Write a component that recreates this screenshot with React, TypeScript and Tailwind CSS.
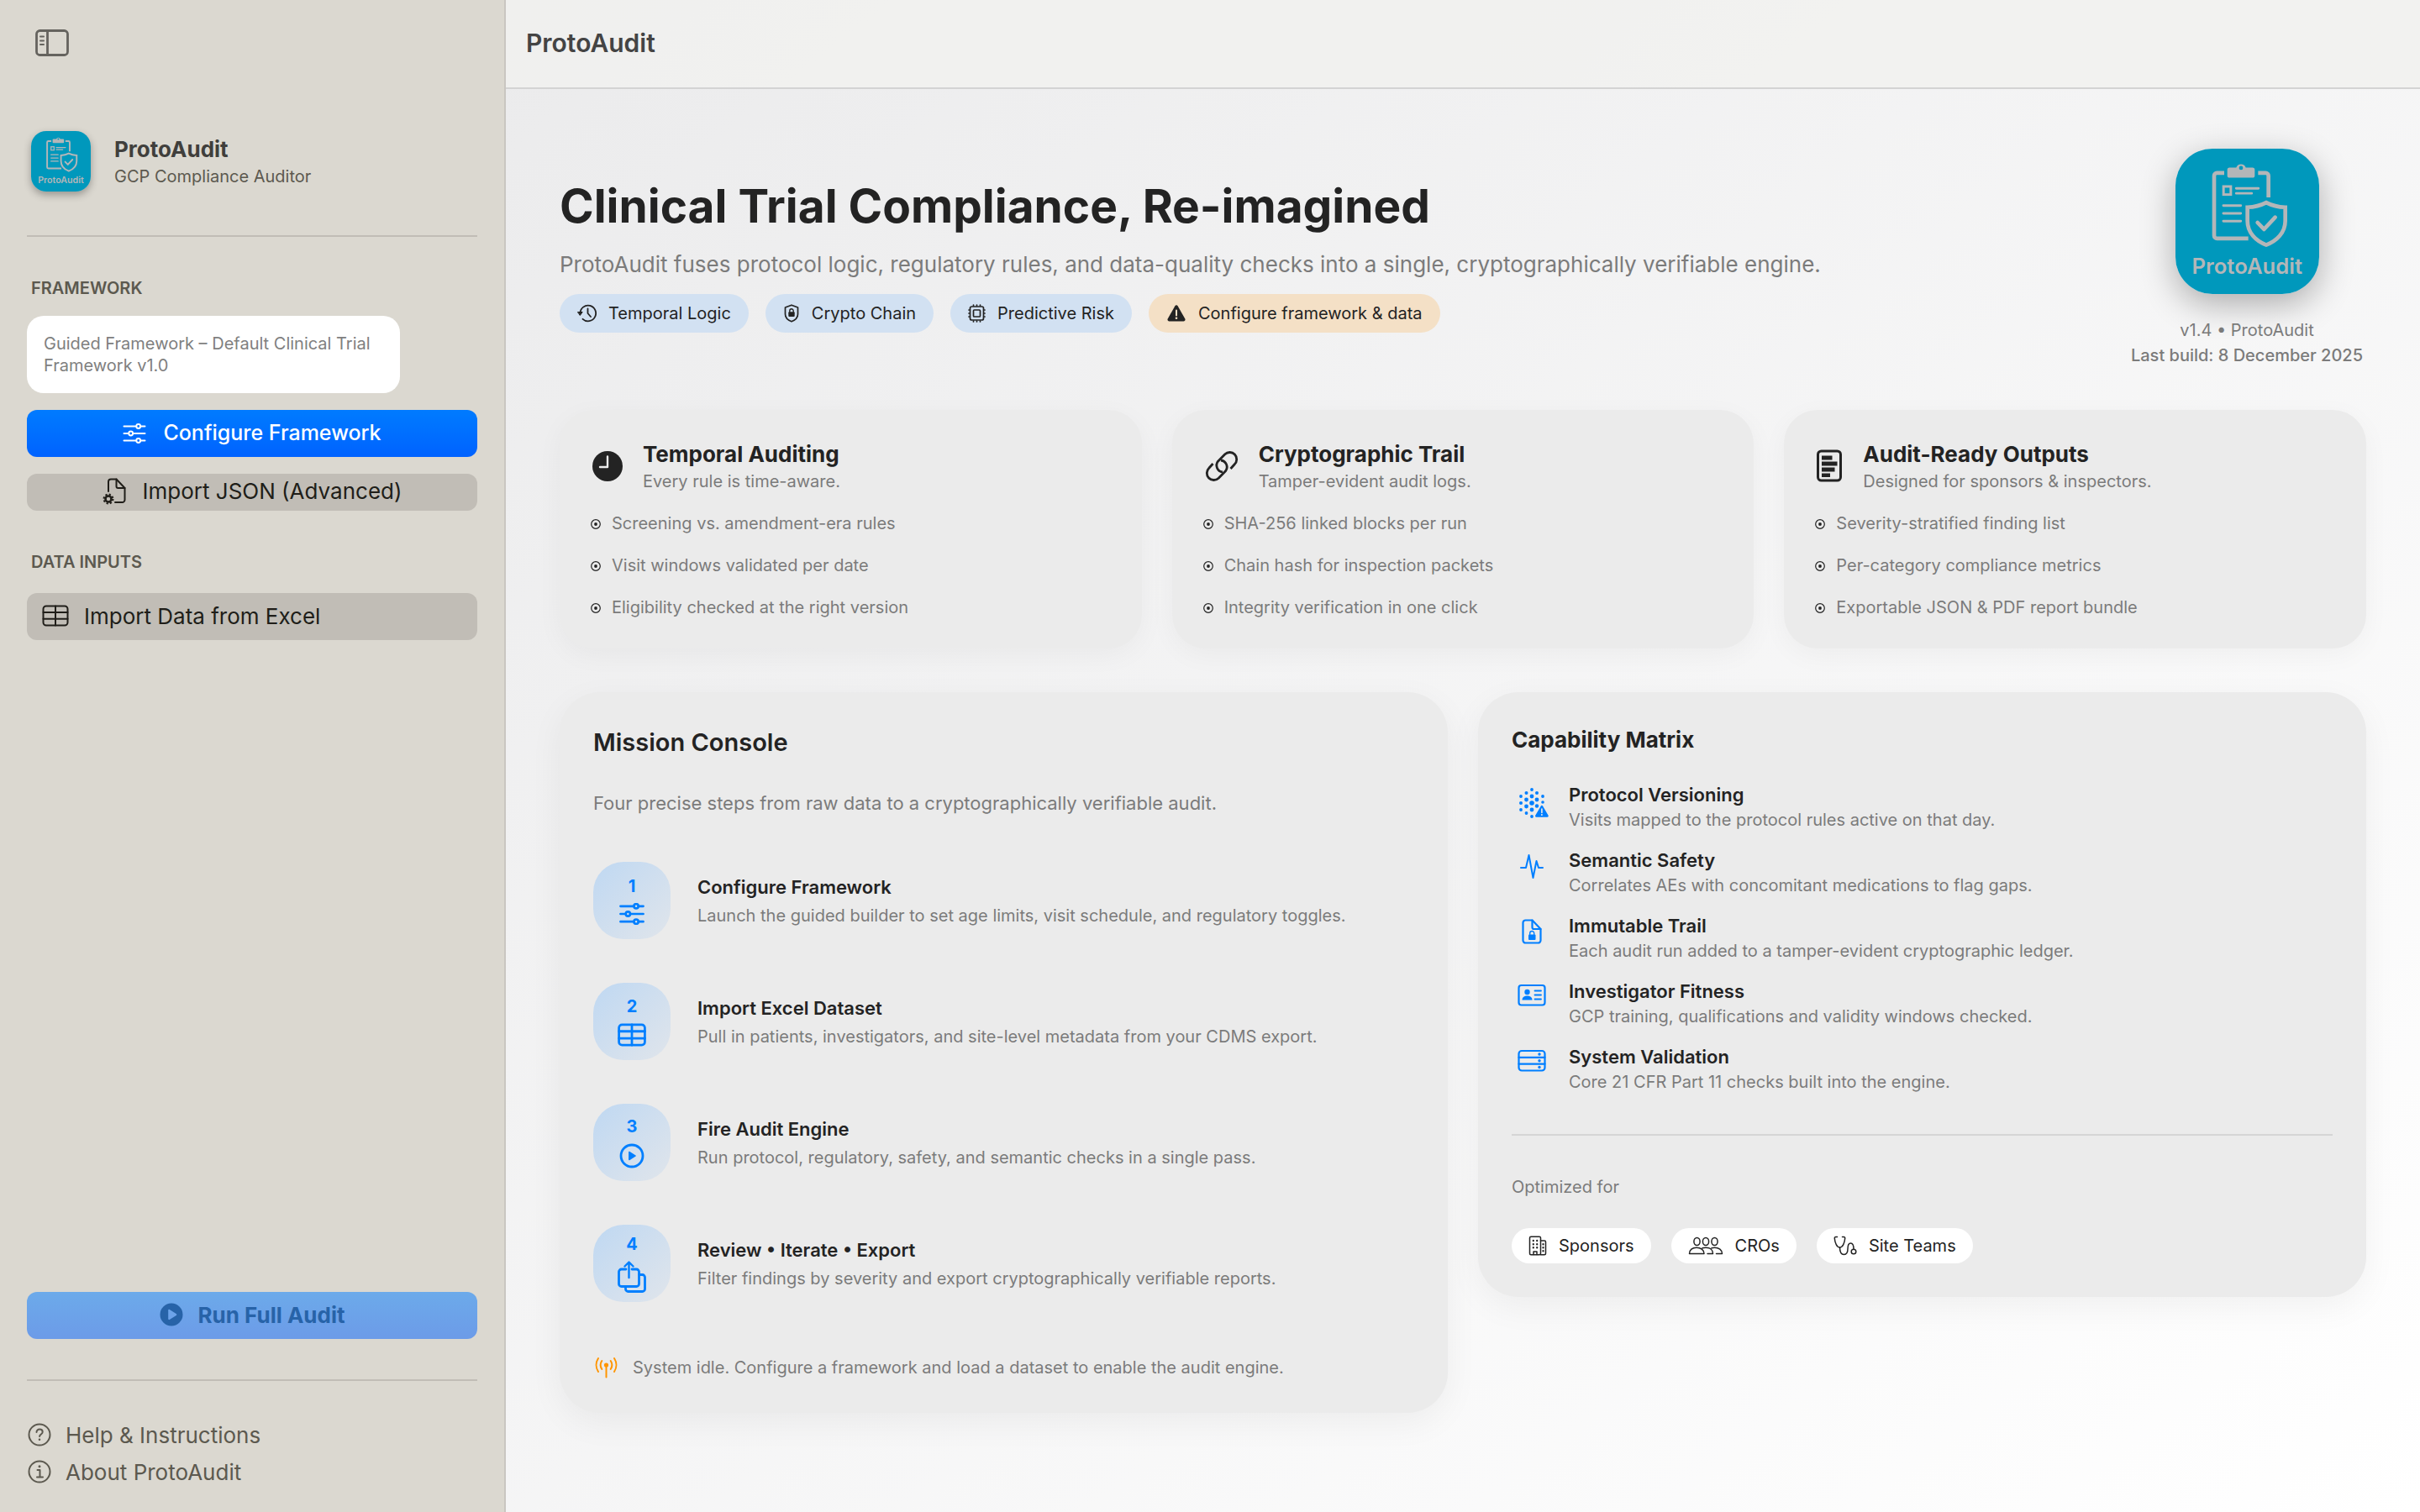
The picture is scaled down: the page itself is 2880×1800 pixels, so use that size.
import React from 'react';

type IconProps = { className?: string };

const stroke = {
  fill: 'none',
  stroke: 'currentColor',
  strokeLinecap: 'round' as const,
  strokeLinejoin: 'round' as const,
};

const SidebarIcon = () => (
  <svg width="40" height="32" viewBox="0 0 40 32" {...stroke} strokeWidth="2.8">
    <rect x="1.5" y="1.5" width="37" height="29" rx="4" />
    <path d="M14.5 1.5v29" />
    <path d="M6 8.5h4M6 13.500h4M6 18h4" strokeWidth="2" />
  </svg>
);

const SlidersIcon = ({ className }: IconProps) => (
  <svg className={className} viewBox="0 0 28 24" {...stroke} strokeWidth="2">
    <path d="M1.5 3.500h14.500M21.500 3.500h5M1.500 12h5.500M12.500 12h14M1.500 20.500h14.500M21.500 20.500h5" />
    <circle cx="18.7" cy="3.5" r="2.4" />
    <circle cx="9.7" cy="12" r="2.4" />
    <circle cx="18.7" cy="20.5" r="2.4" />
  </svg>
);

const FileGearIcon = () => (
  <svg width="28" height="32" viewBox="0 0 28 32" {...stroke} strokeWidth="2">
    <path d="M7 16V4.500a3 3 0 0 1 3-3h6.500L26.500 12v14a3 3 0 0 1-3 3H15" />
    <path d="M16.500 1.500V10a2 2 0 0 0 2 2h8" />
    <circle cx="7" cy="25" r="3.5" strokeWidth="2.6" />
    <circle cx="7" cy="25" r="5.4" strokeWidth="2.2" strokeDasharray="2.2 2.04" strokeLinecap="butt" />
  </svg>
);

const TableIcon = ({ className, weight = 2 }: IconProps & { weight?: number }) => (
  <svg className={className} viewBox="0 0 32 26" {...stroke} strokeWidth={weight}>
    <rect x="1.5" y="1.5" width="29" height="23" rx="3.5" />
    <path d="M16 1.500v23M1.500 9h29M1.500 16.800h29" />
  </svg>
);

const PlayFilledIcon = () => (
  <svg width="28" height="28" viewBox="0 0 28 28">
    <path
      fill="currentColor"
      fillRule="evenodd"
      d="M14 .5a13.500 13.500 0 1 0 0 27 13.500 13.500 0 0 0 0-27Zm-3.800 8.400v10.200c0 .9.900 1.300 1.600.9l7.900-4.900c.8-.5.8-1.700 0-2.200L11.800 8c-.7-.4-1.600 0-1.600.9Z"
    />
  </svg>
);

const PlayIcon = () => (
  <svg width="30" height="30" viewBox="0 0 30 30" {...stroke} strokeWidth="2.8">
    <circle cx="15" cy="15" r="13" />
    <path d="M11.800 10.400v9.200l7.400-4.600Z" fill="currentColor" strokeWidth="1.4" />
  </svg>
);

const ShareIcon = () => (
  <svg width="34" height="38" viewBox="0 0 34 38" {...stroke} strokeWidth="2.8">
    <path d="M10 10H4.500a3 3 0 0 0-3 3v14.500a3 3 0 0 0 3 3h18a3 3 0 0 0 3-3V13a3 3 0 0 0-3-3H17" />
    <path d="M26 16.500h3.500a3 3 0 0 1 3 3v14a3 3 0 0 1-3 3h-17a3 3 0 0 1-3-3v-2.500" />
    <path d="M13.500 20V2M8.500 6.500l5-5 5 5" strokeWidth="2.4" />
  </svg>
);

const HelpIcon = () => (
  <svg width="28" height="28" viewBox="0 0 28 28" {...stroke} strokeWidth="2">
    <circle cx="14" cy="14" r="12.5" />
    <path d="M10.500 11c0-2 1.600-3.400 3.600-3.400s3.600 1.300 3.600 3.200c0 2.700-3.600 2.700-3.600 5.200" />
    <circle cx="14" cy="19.8" r=".6" fill="currentColor" strokeWidth="1.4" />
  </svg>
);

const InfoIcon = () => (
  <svg width="28" height="28" viewBox="0 0 28 28" {...stroke} strokeWidth="2">
    <circle cx="14" cy="14" r="12.5" />
    <path d="M11.500 12h3v8.500M11 20.500h7" />
    <circle cx="14" cy="7.8" r=".8" fill="currentColor" strokeWidth="1.4" />
  </svg>
);

const HistoryIcon = () => (
  <svg width="23" height="22" viewBox="0 0 23 22" {...stroke} strokeWidth="1.8">
    <path d="M3.500 11a9.300 9.300 0 1 1 3 6.800" />
    <path d="M.8 9.500h5.400L3.500 13.200Z" fill="currentColor" strokeWidth="1" />
    <path d="M12.500 5.500V11l3.500 4" />
  </svg>
);

const ShieldLockIcon = () => (
  <svg width="20" height="22" viewBox="0 0 20 22" {...stroke} strokeWidth="1.7">
    <path d="M10 1.200 17.500 4v8c0 4.500-3 7-7.500 8.800C5.500 19 2.500 16.500 2.500 12V4Z" />
    <rect x="6.3" y="9.3" width="7.4" height="5.6" rx="1" fill="currentColor" stroke="none" />
    <path d="M7.800 9.500V8a2.200 2.200 0 0 1 4.400 0v1.500" strokeWidth="1.4" />
  </svg>
);

const CpuIcon = () => (
  <svg width="21" height="22" viewBox="0 0 21 22" {...stroke} strokeWidth="1.7">
    <rect x="2.5" y="3" width="16" height="16" rx="2" />
    <rect x="6.5" y="7" width="8" height="8" rx="1" />
    <path d="M6.500 1v1M10.500 1v1M14.500 1v1M6.500 20v1M10.500 20v1M14.500 20v1M1 7h.5M1 11h.5M1 15h.5M19.500 7h.5M19.500 11h.5M19.500 15h.5" />
  </svg>
);

const WarningIcon = () => (
  <svg width="24" height="20" viewBox="-1 0 24 20">
    <path fill="currentColor" d="M9.400 1.200a1.900 1.900 0 0 1 3.200 0l8.700 15.400c.7 1.300-.2 2.900-1.700 2.900H2.400c-1.500 0-2.400-1.600-1.700-2.900Z" />
    <path d="M11 6.500v6" stroke="#f4e0c6" strokeWidth="2" strokeLinecap="round" />
    <circle cx="11" cy="15.8" r="1.3" fill="#f4e0c6" />
  </svg>
);

const ClockIcon = () => (
  <svg width="39" height="38" viewBox="0 0 39 38">
    <circle cx="21" cy="19" r="18" fill="currentColor" />
    <path d="M21 7.500V20h-9" fill="none" stroke="#ebebeb" strokeWidth="2.4" strokeLinecap="round" strokeLinejoin="round" />
  </svg>
);

const LinkIcon = () => (
  <svg width="43" height="38" viewBox="-4 0 43 38" {...stroke} strokeWidth="2.8" strokeLinecap="butt">
    <path d="M29.500 22L34.200 16.700A8 8 0 0 0 22.800 4.800L14.500 13.200A8 8 0 0 0 20 26" />
    <path d="M8.500 16L3.800 21.300A8 8 0 0 0 15.200 33.200L23.500 24.800A8 8 0 0 0 18 12" />
  </svg>
);

const ReportIcon = () => (
  <svg width="34" height="40" viewBox="0 0 34 40">
    <rect x="4.5" y="2" width="27" height="35" rx="4" fill="none" stroke="currentColor" strokeWidth="3" />
    <path fill="currentColor" d="M9 7.500H21.500v5H9ZM9 14.500H27.500v5H9ZM9 21.500H24.500v5H9ZM9 28.500H19v4.500H9Z" />
  </svg>
);

const BulletIcon = () => (
  <svg width="14" height="12" viewBox="0 0 14 12">
    <circle cx="7" cy="6" r="5.3" fill="none" stroke="currentColor" strokeWidth="1.2" />
    <circle cx="7" cy="6" r="1.9" fill="currentColor" />
  </svg>
);

const AntennaIcon = () => (
  <svg width="31" height="26" viewBox="0 0 31 26" {...stroke} strokeWidth="2">
    <path d="M6 2a14.500 14.500 0 0 0 0 16M25 2a14.500 14.500 0 0 1 0 16M10.300 5a9 9 0 0 0 0 10M20.700 5a9 9 0 0 1 0 10M15.500 11v13.500" />
    <circle cx="15.5" cy="10" r="1.6" fill="currentColor" />
  </svg>
);

const dots = [
  [17, 3, 1.9], [10.5, 7, 2], [23, 7, 2], [4, 11, 1.9], [17, 11, 2.4], [30, 11, 1.9],
  [10.5, 15, 2.4], [23, 15, 2.4], [4, 19, 2], [17, 19, 2.8], [30, 18, 1.8],
  [10.5, 23, 2.4], [23, 22.5, 2.2], [4, 27, 1.9], [17, 27, 2.4], [10.5, 31, 1.9], [17, 35, 1.9],
];

const DotsIcon = () => (
  <svg width="38" height="38" viewBox="-2 0 38 38" className="overflow-visible" fill="currentColor">
    {dots.map(([x, y, r]) => (
      <circle key={`${x}-${y}`} cx={x} cy={y} r={r} />
    ))}
    <path d="M27.800 22.500c.5-.9 1.700-.9 2.200 0l6.600 11.300c.5.9-.1 1.900-1.100 1.900H22.300c-1 0-1.600-1-1.100-1.900Z" />
    <path d="M28.900 26v4.500" stroke="#ebebeb" strokeWidth="1.6" strokeLinecap="round" />
    <circle cx="28.9" cy="33" r="1" fill="#ebebeb" />
  </svg>
);

const PulseIcon = () => (
  <svg width="30" height="32" viewBox="0 0 30 32" {...stroke} strokeWidth="2">
    <path d="M2 18h6L11.500 3l5 27 4-20 2.500 8h5" />
  </svg>
);

const FileLockIcon = () => (
  <svg width="24" height="32" viewBox="0 0 24 32" {...stroke} strokeWidth="2.2">
    <path d="M4.500 2.500h8L22.500 13v13.500a3 3 0 0 1-3 3h-15a3 3 0 0 1-3-3v-21a3 3 0 0 1 3-3Z" />
    <path d="M12.500 2.500V11a2 2 0 0 0 2 2h8" />
    <rect x="8" y="19.5" width="8.5" height="6.5" rx="1" fill="currentColor" stroke="none" />
    <path d="M9.700 19.500V18a2.500 2.500 0 0 1 5 0v1.500" strokeWidth="1.4" />
  </svg>
);

const IdCardIcon = () => (
  <svg width="34" height="28" viewBox="0 0 34 28" {...stroke} strokeWidth="2.2">
    <rect x="1.5" y="2" width="31" height="23.5" rx="3" />
    <circle cx="11.5" cy="10" r="3.2" fill="currentColor" stroke="none" />
    <path d="M5.500 19.500c0-3.500 2.700-5 6-5s6 1.500 6 5Z" fill="currentColor" stroke="none" />
    <path d="M20.500 8.500h7.500M20.500 13.500h7.500M20.500 18.500h7.500" strokeWidth="1.8" />
  </svg>
);

const ServerIcon = () => (
  <svg width="34" height="28" viewBox="0 0 34 28" {...stroke} strokeWidth="2.2">
    <rect x="1.5" y="2" width="31" height="23.5" rx="3.5" />
    <path d="M1.500 9.800h31M1.500 17.600h31" />
    <g fill="currentColor" stroke="none">
      <circle cx="26" cy="6" r="1.7" />
      <circle cx="26" cy="13.7" r="1.7" />
      <circle cx="26" cy="21.5" r="1.7" />
    </g>
  </svg>
);

const BuildingIcon = () => (
  <svg width="22" height="24" viewBox="0 0 22 24" {...stroke} strokeWidth="1.5">
    <rect x="1.5" y="1.2" width="13" height="21.6" rx="1.5" />
    <path d="M14.500 6h4.500a1.500 1.500 0 0 1 1.500 1.500v13.800a1.500 1.500 0 0 1-1.500 1.500h-4.500M6 22.500V19h4v3.500" />
    <path d="M5.800 5.800v.4M10.200 5.800v.4M5.800 10v.4M10.200 10v.4M5.800 14v.4M10.200 14v.4M17.500 10v.4M17.500 14v.4M17.500 18v.4" strokeWidth="2.2" />
  </svg>
);

const PeopleIcon = () => (
  <svg width="42" height="22" viewBox="0 0 42 22" {...stroke} strokeWidth="1.5">
    <ellipse cx="10.5" cy="6" rx="3.6" ry="4.5" />
    <ellipse cx="21" cy="6" rx="3.6" ry="4.5" />
    <ellipse cx="31.5" cy="6" rx="3.6" ry="4.5" />
    <path d="M1.500 20.500c0-4.500 3.500-7.300 8.500-7.300s9 2.800 9 7.300ZM17 13.800c1.200-.4 2.500-.6 4-.6 5 0 8.500 2.800 8.500 7.300h-6.500M28 13.800c1.200-.4 2.200-.6 3.500-.6 5 0 9 2.800 9 7.300h-7" />
  </svg>
);

const StethoscopeIcon = () => (
  <svg width="28" height="24" viewBox="0 0 28 24" {...stroke} strokeWidth="1.5">
    <path d="M4.500 1.500H2.800a1.500 1.500 0 0 0-1.500 1.700C1.700 8.500 4 14 7.500 14s5.800-5.500 6.200-10.800a1.500 1.500 0 0 0-1.500-1.700h-1.700" />
    <path d="M7.500 14c0 5 1.500 8.500 5 8.500 4 0 4.500-3 4.500-7s1-6.500 3.500-6.500c2.200 0 3.500 2.500 3.500 7" />
    <circle cx="24" cy="19" r="2.8" />
  </svg>
);

const AppLogo = ({ className }: IconProps) => (
  <svg className={className} viewBox="0 0 513 521" preserveAspectRatio="none" role="img" aria-label="ProtoAudit logo">
    <rect width="513" height="521" fill="#0098bc" />
    <g fill="none" stroke="#b4b6b8" strokeWidth="14">
      <path d="M174 87h-26a10 10 0 0 0-10 10v215a10 10 0 0 0 10 10h112M295 87h27a10 10 0 0 1 10 10v78" />
      <path d="M324 193q-30 16-67 17v49c0 42 30 72 67 86 37-14 68-44 68-86v-49q-38-1-68-17Z" />
      <path d="M293 265l23 24 40-43" strokeLinecap="round" strokeLinejoin="round" />
    </g>
    <g fill="none" stroke="#b4b6b8" strokeWidth="9" strokeLinecap="round">
      <rect x="171.5" y="135.5" width="26" height="29" />
      <path d="M217 142h79M217 160h55M171 204h62M171 232h62M171 260h62" />
    </g>
    <path
      fill="#b4b6b8"
      fillRule="evenodd"
      d="M193 68h24a18 18 0 0 1 34 0h24a8 8 0 0 1 8 8v20a8 8 0 0 1-8 8h-82a8 8 0 0 1-8-8V76a8 8 0 0 1 8-8Zm41-6a7 7 0 1 0 0 14 7 7 0 0 0 0-14Z"
    />
    <text x="256" y="448" textAnchor="middle" fontSize="77" fontWeight="600" fill="#b4b6b8">
      ProtoAudit
    </text>
  </svg>
);

const chips = [
  { label: 'Temporal Logic', icon: <HistoryIcon />, tone: 'bg-[#d2e1f2]' },
  { label: 'Crypto Chain', icon: <ShieldLockIcon />, tone: 'bg-[#d2e1f2]' },
  { label: 'Predictive Risk', icon: <CpuIcon />, tone: 'bg-[#d2e1f2]' },
  { label: 'Configure framework & data', icon: <WarningIcon />, tone: 'bg-[#f4e0c6]' },
];

const features = [
  {
    title: 'Temporal Auditing',
    subtitle: 'Every rule is time-aware.',
    icon: <ClockIcon />,
    points: ['Screening vs. amendment-era rules', 'Visit windows validated per date', 'Eligibility checked at the right version'],
  },
  {
    title: 'Cryptographic Trail',
    subtitle: 'Tamper-evident audit logs.',
    icon: <LinkIcon />,
    points: ['SHA-256 linked blocks per run', 'Chain hash for inspection packets', 'Integrity verification in one click'],
  },
  {
    title: 'Audit-Ready Outputs',
    subtitle: 'Designed for sponsors & inspectors.',
    icon: <ReportIcon />,
    points: ['Severity-stratified finding list', 'Per-category compliance metrics', 'Exportable JSON & PDF report bundle'],
  },
];

const steps = [
  {
    title: 'Configure Framework',
    text: 'Launch the guided builder to set age limits, visit schedule, and regulatory toggles.',
    icon: <SlidersIcon className="h-[26px] w-[32px] stroke-[2.5]" />,
  },
  {
    title: 'Import Excel Dataset',
    text: 'Pull in patients, investigators, and site-level metadata from your CDMS export.',
    icon: <TableIcon className="h-[28px] w-[34px]" weight={2.6} />,
  },
  {
    title: 'Fire Audit Engine',
    text: 'Run protocol, regulatory, safety, and semantic checks in a single pass.',
    icon: <PlayIcon />,
  },
  {
    title: 'Review • Iterate • Export',
    text: 'Filter findings by severity and export cryptographically verifiable reports.',
    icon: <ShareIcon />,
  },
];

const capabilities = [
  { title: 'Protocol Versioning', text: 'Visits mapped to the protocol rules active on that day.', icon: <DotsIcon /> },
  { title: 'Semantic Safety', text: 'Correlates AEs with concomitant medications to flag gaps.', icon: <PulseIcon /> },
  { title: 'Immutable Trail', text: 'Each audit run added to a tamper-evident cryptographic ledger.', icon: <FileLockIcon /> },
  { title: 'Investigator Fitness', text: 'GCP training, qualifications and validity windows checked.', icon: <IdCardIcon /> },
  { title: 'System Validation', text: 'Core 21 CFR Part 11 checks built into the engine.', icon: <ServerIcon /> },
];

const audiences = [
  { label: 'Sponsors', icon: <BuildingIcon /> },
  { label: 'CROs', icon: <PeopleIcon /> },
  { label: 'Site Teams', icon: <StethoscopeIcon /> },
];

const Sidebar = () => (
  <aside className="flex w-[602px] shrink-0 flex-col border-r-2 border-[#c9c6c1] bg-[#dbd8d0] px-8 pb-[26px] pt-[35px] text-[#5c594f]">
    <button className="ml-[10px] self-start text-[#65635e]" aria-label="Toggle sidebar">
      <SidebarIcon />
    </button>

    <div className="mt-[89px] flex items-center gap-7 pl-[5px]">
      <AppLogo className="h-[72px] w-[71px] rounded-[18px] shadow-[0_4px_10px_rgba(0,0,0,0.3)]" />
      <div className="pt-[3px]">
        <h2 className="text-[26px] font-bold leading-8 text-[#403f3c]">ProtoAudit</h2>
        <p className="text-xl leading-8">GCP Compliance Auditor</p>
      </div>
    </div>

    <hr className="mt-[52px] border-t-2 border-[#c1bdb6]" />

    <h3 className="mt-[49px] pl-[5px] text-xl font-semibold leading-6">FRAMEWORK</h3>
    <div className="mt-[21px] max-w-[444px] rounded-[20px] bg-white px-5 py-5 text-xl leading-[26px] text-[#808080]">
      Guided Framework – Default Clinical Trial Framework v1.0
    </div>
    <button className="mt-5 flex h-14 items-center justify-center gap-5 rounded-xl bg-linear-to-b from-[#007bff] to-[#0062ff] text-[25px] font-medium text-white">
      <SlidersIcon className="h-[24px] w-[28px]" />
      Configure Framework
    </button>
    <button className="mt-5 flex h-11 items-center justify-center gap-5 rounded-xl bg-[#c1bdb6] pb-[3px] text-[26px] text-[#201e19]">
      <FileGearIcon />
      Import JSON (Advanced)
    </button>

    <h3 className="mt-[49px] pl-[5px] text-xl font-semibold leading-6">DATA INPUTS</h3>
    <button className="mt-[25px] flex h-14 items-center gap-[18px] rounded-xl bg-[#c1bdb6] px-[18px] pb-0.5 text-[26px] text-[#201e19]">
      <TableIcon className="h-[26px] w-[32px]" />
      Import Data from Excel
    </button>

    <button
      disabled
      className="mt-auto flex h-14 items-center justify-center gap-[18px] rounded-xl bg-linear-to-b from-[#6caaea] to-[#6c9be8] pb-0.5 text-[26px] font-bold text-[#2763a8]"
    >
      <PlayFilledIcon />
      Run Full Audit
    </button>

    <hr className="mt-12 border-t-2 border-[#c1bdb6]" />

    <nav className="mt-[42px] flex flex-col pl-px text-[26px]">
      <a href="#help" className="flex h-11 items-center gap-[17px]">
        <HelpIcon />
        Help &amp; Instructions
      </a>
      <a href="#about" className="flex h-11 items-center gap-[17px]">
        <InfoIcon />
        About ProtoAudit
      </a>
    </nav>
  </aside>
);

const Hero = () => (
  <section className="flex items-start justify-between">
    <div className="pt-[31px]">
      <h1 className="text-[55px] font-bold leading-[74px]">Clinical Trial Compliance, Re-imagined</h1>
      <p className="mt-[17px] text-[26px] leading-8 text-[#7b7b7b]">
        ProtoAudit fuses protocol logic, regulatory rules, and data-quality checks into a single, cryptographically
        verifiable engine.
      </p>
      <ul className="mt-[19px] flex gap-5">
        {chips.map((chip) => (
          <li key={chip.label} className={`flex h-[46px] items-center gap-[14px] rounded-full px-[21px] text-xl ${chip.tone}`}>
            {chip.icon}
            {chip.label}
          </li>
        ))}
      </ul>
    </div>
    <div className="flex min-w-[284px] flex-col items-center text-xl leading-[30px] text-[#7b7b7b]">
      <AppLogo className="mb-7 h-[173px] w-[171px] rounded-[44px] shadow-[0_12px_40px_rgba(0,0,0,0.3)]" />
      <p>v1.4 • ProtoAudit</p>
      <p className="font-medium">Last build: 8 December 2025</p>
    </div>
  </section>
);

const FeatureCards = () => (
  <section className="mt-[50px] grid grid-cols-3 gap-9">
    {features.map((feature) => (
      <article key={feature.title} className="rounded-[40px] bg-[#ebebeb] px-9 py-[37px] shadow-[0_8px_32px_rgba(0,0,0,0.04)]">
        <div className="flex items-center gap-6">
          {feature.icon}
          <div>
            <h2 className="text-[26px] font-bold leading-8">{feature.title}</h2>
            <p className="mt-1 text-xl leading-6 text-[#7b7b7b]">{feature.subtitle}</p>
          </div>
        </div>
        <ul className="mt-[26px] flex flex-col gap-[26px]">
          {feature.points.map((point) => (
            <li key={point} className="flex items-baseline gap-3 text-xl leading-6">
              <BulletIcon />
              <span className="text-[#7b7b7b]">{point}</span>
            </li>
          ))}
        </ul>
      </article>
    ))}
  </section>
);

const MissionConsole = () => (
  <section className="rounded-[48px] bg-[#ebebeb] p-10 shadow-[0_12px_40px_rgba(0,0,0,0.05)]">
    <h2 className="text-[29px] font-semibold leading-10">Mission Console</h2>
    <p className="mt-[38px] text-[22px] leading-7 text-[#7b7b7b]">
      Four precise steps from raw data to a cryptographically verifiable audit.
    </p>
    <ol className="mt-14 flex flex-col gap-[52px]">
      {steps.map((step, i) => (
        <li key={step.title} className="flex items-center gap-8">
          <div className="flex size-[92px] shrink-0 flex-col items-center justify-center gap-2 rounded-[36px] bg-linear-to-br from-[#bfd8f2] to-[#e0e5eb] text-[#007fff]">
            <span className="text-xl font-bold leading-6">{i + 1}</span>
            {step.icon}
          </div>
          <div>
            <h3 className="text-[22px] font-semibold leading-7">{step.title}</h3>
            <p className="mt-2 text-xl leading-6 text-[#7b7b7b]">{step.text}</p>
          </div>
        </li>
      ))}
    </ol>
    <p className="mt-16 flex items-center gap-4 text-xl leading-7 text-[#7b7b7b]">
      <span className="text-[#ff9500]">
        <AntennaIcon />
      </span>
      System idle. Configure a framework and load a dataset to enable the audit engine.
    </p>
  </section>
);

const CapabilityMatrix = () => (
  <section className="rounded-[48px] bg-[#ebebeb] p-10 shadow-[0_12px_40px_rgba(0,0,0,0.05)]">
    <h2 className="text-[26px] font-bold leading-[34px]">Capability Matrix</h2>
    <ul className="mt-[34px] flex flex-col gap-[22px]">
      {capabilities.map((item) => (
        <li key={item.title} className="flex gap-5">
          <div className="flex h-14 w-12 shrink-0 justify-center pt-[5px] text-[#007fff]">{item.icon}</div>
          <div>
            <h3 className="text-[22px] font-semibold leading-7">{item.title}</h3>
            <p className="mt-1 text-xl leading-6 text-[#7b7b7b]">{item.text}</p>
          </div>
        </li>
      ))}
    </ul>
    <hr className="mt-[50px] border-t-2 border-[#d5d5d5]" />
    <p className="mt-[49px] text-xl leading-6 text-[#7b7b7b]">Optimized for</p>
    <ul className="mt-[37px] flex gap-6">
      {audiences.map((item) => (
        <li key={item.label} className="flex h-[42px] items-center gap-[14px] rounded-full bg-white px-5 text-xl">
          {item.icon}
          {item.label}
        </li>
      ))}
    </ul>
  </section>
);

export default function App() {
  return (
    <div className="flex min-h-screen font-['Inter','Liberation_Sans',sans-serif] text-[#232323]">
      <Sidebar />
      <div className="flex min-w-0 flex-1 flex-col bg-linear-to-br from-[#ebebec] to-white">
        <header className="flex h-[106px] items-center border-b-2 border-[#d3d3d3] bg-[#f1f1ef]/80 px-6 pb-0.5">
          <h1 className="text-[30px] font-semibold text-[#444444]">ProtoAudit</h1>
        </header>
        <main className="px-16 pb-16 pt-[71px]">
          <Hero />
          <FeatureCards />
          <div className="mt-[52px] grid grid-cols-2 items-start gap-9">
            <MissionConsole />
            <CapabilityMatrix />
          </div>
        </main>
      </div>
    </div>
  );
}
